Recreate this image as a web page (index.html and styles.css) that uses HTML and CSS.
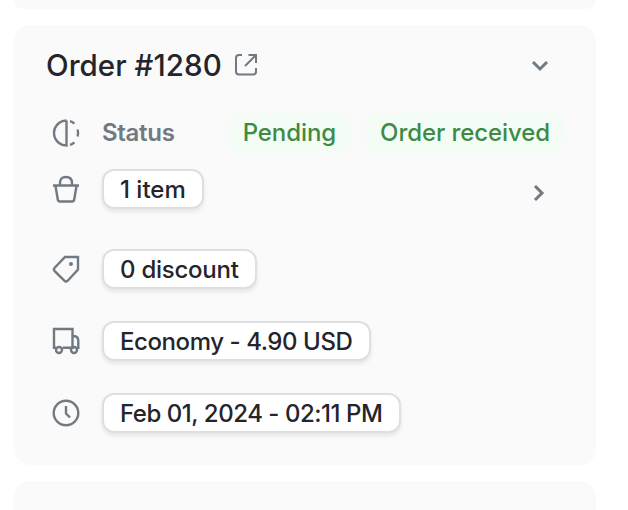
FILE: index.html
```html
<!DOCTYPE html>
<html lang="en">
<head>
<meta charset="utf-8">
<title>Order #1280</title>
<link rel="stylesheet" href="styles.css">
</head>
<body>
<main class="stack">
  <section class="card card-previous"></section>
  <section class="card card-order">
    <header class="header">
      <h1 class="title">Order #1280</h1>
      <svg class="icon-open" viewBox="0 0 24 24"><path d="M8 2H5Q2 2 2 5v13.500Q2 21.500 5 21.500h14q3 0 3-3V15M11 13 21.500 2.500M14.500 2H22v8"/></svg>
      <svg class="chevron" viewBox="0 0 20 20"><path d="m3 7 7 7 7-7"/></svg>
    </header>
    <div class="row row-status">
      <svg class="icon" viewBox="0 0 28 28"><path d="M14.500 1.500v25Q10 26.500 7 24Q2 20 2 14t5-10q3-2.500 7.500-2.500M18 2.100q2.300.6 4.400 2.500M25.600 10.500q1 3.500 0 7M22.400 23.400q-2.100 1.900-4.400 2.500"/></svg>
      <span class="label">Status</span>
      <div class="badges">
        <span class="badge badge-pending">Pending</span>
        <span class="badge badge-received">Order received</span>
      </div>
    </div>
    <div class="row row-items">
      <svg class="icon" viewBox="0 0 28 28"><path d="M1 10.500h26M3.500 11l2.300 13.500q.3 2 2.200 2h12q1.900 0 2.200-2L24.500 11M8 10V8q0-6 6-6t6 6v2"/></svg>
      <span class="pill pill-items">1 item</span>
      <svg class="chevron chevron-next" viewBox="0 0 20 20"><path d="m7 3 7 7-7 7"/></svg>
    </div>
    <div class="row row-discount">
      <svg class="icon" viewBox="0 0 28 28"><path d="M13 2h13v12.500L15.700 25.700q-1.700 1.600-3.400 0l-9.600-9.600q-1.600-1.700 0-3.400Z"/><circle class="dot" cx="19" cy="9" r="2"/></svg>
      <span class="pill pill-discount">0 discount</span>
    </div>
    <div class="row row-shipping">
      <svg class="icon" viewBox="0 0 28 28"><path d="M4 20.700H2V2h18.500v18.700h-10M20.500 9h1q4.800 0 4.800 5v6.700h-1.500"/><circle cx="7" cy="23" r="3"/><circle cx="22" cy="23" r="3"/></svg>
      <span class="pill pill-shipping">Economy - 4.90 USD</span>
    </div>
    <div class="row row-date">
      <svg class="icon" viewBox="0 0 28 28"><circle cx="14" cy="14" r="12.300"/><path d="M14 7v7.500l4 4"/></svg>
      <span class="pill pill-date">Feb 01, 2024 - 02:11 PM</span>
    </div>
  </section>
  <section class="card card-next"></section>
</main>
</body>
</html>
```
FILE: styles.css
```css
* { box-sizing: border-box; }
body {
  margin: 0;
  height: 510px;
  overflow: hidden;
  background: #fff;
  color: #24242b;
  font-family: Inter, "Liberation Sans", sans-serif;
  font-size: 24px;
  font-weight: 500;
}
.stack {
  display: flex;
  flex-direction: column;
  gap: 16px;
  padding: 0 32px 0 14px;
}
.card { background: #fafafa; border-radius: 16px; }
.card-previous { height: 9px; border-radius: 0 0 16px 16px; }
.card-order { height: 440px; padding: 20px 34px 0 32px; }
.card-next { height: 29px; border-radius: 16px 16px 0 0; }
.header { display: flex; align-items: center; height: 40px; }
.title {
  margin: 0;
  width: 188px;
  font-size: 29.5px;
  font-weight: 500;
  letter-spacing: 0.05px;
  line-height: 42px;
  white-space: nowrap;
}
svg { fill: none; stroke: #717982; stroke-width: 2.4; flex: none; }
.icon-open { width: 24px; height: 24px; stroke-width: 2; }
.chevron { width: 20px; height: 20px; margin: 0 12px 0 auto; stroke-width: 3; }
.chevron-next { margin: 7px 14px 0 auto; }
.row { display: flex; align-items: center; height: 40px; padding-left: 6px; }
.icon { width: 28px; height: 28px; margin-right: 22px; }
.dot { fill: #717982; stroke: none; }
.row-status { margin-top: 28px; }
.row-items { margin-top: 16px; }
.row-discount { margin-top: 40px; }
.row-shipping, .row-date { margin-top: 32px; }
.label { color: #717982; font-weight: 600; letter-spacing: -0.3px; line-height: 40px; }
.badges { display: flex; gap: 16px; margin: 0 -2px 0 auto; }
.badge {
  height: 40px;
  padding: 0 14px;
  border-radius: 12px;
  background: #f3fdf6;
  color: #3d8b45;
  letter-spacing: -0.08px;
  line-height: 40px;
  white-space: nowrap;
}
.pill {
  height: 40px;
  padding: 0 16px;
  border: 2px solid #dfdfe1;
  border-radius: 12px;
  background: #fff;
  box-shadow: 0 3px 4px rgb(0 0 0 / 8%);
  line-height: 37px;
  white-space: nowrap;
}
.pill-discount { letter-spacing: -0.25px; }
.pill-shipping { padding-right: 16.6px; letter-spacing: -0.42px; }
.pill-date { padding-right: 16.6px; letter-spacing: -0.46px; }
```
